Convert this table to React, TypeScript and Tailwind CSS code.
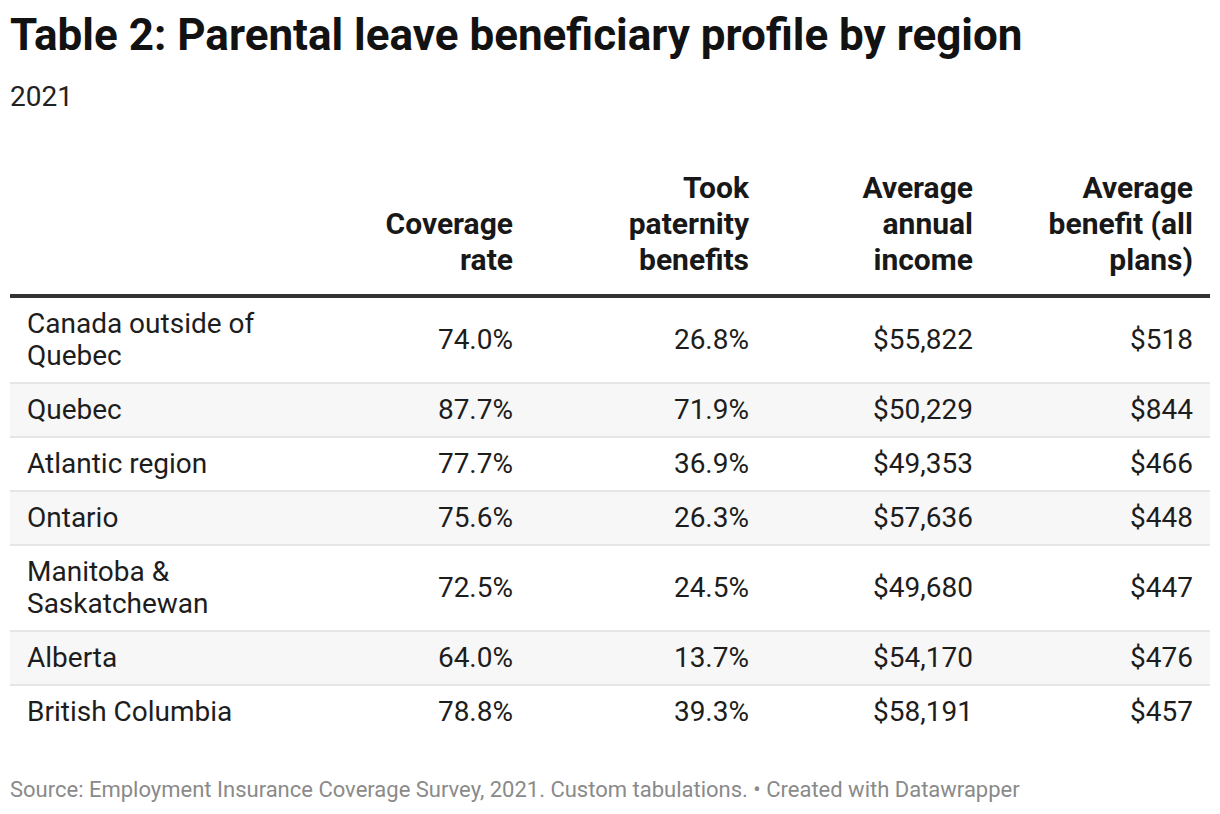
const rows: [React.ReactNode, string, string, string, string][] = [
  [<>Canada outside of<br />Quebec</>, '74.0%', '26.8%', '$55,822', '$518'],
  ['Quebec', '87.7%', '71.9%', '$50,229', '$844'],
  ['Atlantic region', '77.7%', '36.9%', '$49,353', '$466'],
  ['Ontario', '75.6%', '26.3%', '$57,636', '$448'],
  [<>Manitoba &amp;<br />Saskatchewan</>, '72.5%', '24.5%', '$49,680', '$447'],
  ['Alberta', '64.0%', '13.7%', '$54,170', '$476'],
  ['British Columbia', '78.8%', '39.3%', '$58,191', '$457'],
];

export default function App() {
  return (
    <div className="w-[1220px] h-[814px] bg-white px-[10px] pt-[11px] font-['Roboto',sans-serif] text-[#1d1d1d]">
      <h1 className="text-[44px] leading-[48px] font-bold text-[#121212]">
        Table 2: Parental leave beneficiary profile by region
      </h1>
      <p className="mt-[22px] text-[28px] leading-[32px] text-[#222]">2021</p>

      <table className="mt-[57px] w-[1200px] table-fixed border-collapse">
        <colgroup>
          <col className="w-[290px]" />
          <col className="w-[230px]" />
          <col className="w-[236px]" />
          <col className="w-[224px]" />
          <col className="w-[220px]" />
        </colgroup>
        <thead>
          <tr className="border-b-4 border-[#333]">
            <th />
            <th className="px-[17px] pb-[16px] text-right align-bottom text-[30px] leading-[36px] font-bold text-[#181818]">
              Coverage<br />rate
            </th>
            <th className="px-[17px] pb-[16px] text-right align-bottom text-[30px] leading-[36px] font-bold text-[#181818]">
              Took<br />paternity<br />benefits
            </th>
            <th className="px-[17px] pb-[16px] text-right align-bottom text-[30px] leading-[36px] font-bold text-[#181818]">
              Average<br />annual<br />income
            </th>
            <th className="px-[17px] pb-[16px] text-right align-bottom text-[30px] leading-[36px] font-bold text-[#181818]">
              Average<br />benefit (all<br />plans)
            </th>
          </tr>
        </thead>
        <tbody>
          {rows.map((r, i) => (
            <tr
              key={i}
              className={`${i < rows.length - 1 ? 'border-b-2 border-[#e6e6e6]' : ''} ${i % 2 === 1 ? 'bg-[#f7f7f7]' : 'bg-white'}`}
            >
              <td className="px-[17px] py-[10px] text-left text-[28px] leading-[32px]">{r[0]}</td>
              <td className="px-[17px] py-[10px] text-right text-[28px] leading-[32px]">{r[1]}</td>
              <td className="px-[17px] py-[10px] text-right text-[28px] leading-[32px]">{r[2]}</td>
              <td className="px-[17px] py-[10px] text-right text-[28px] leading-[32px]">{r[3]}</td>
              <td className="px-[17px] py-[10px] text-right text-[28px] leading-[32px]">{r[4]}</td>
            </tr>
          ))}
        </tbody>
      </table>

      <p className="mt-[40px] text-[22px] leading-[24px] text-[#8a8a8a]">
        Source: Employment Insurance Coverage Survey, 2021. Custom tabulations. • Created with Datawrapper
      </p>
    </div>
  );
}
